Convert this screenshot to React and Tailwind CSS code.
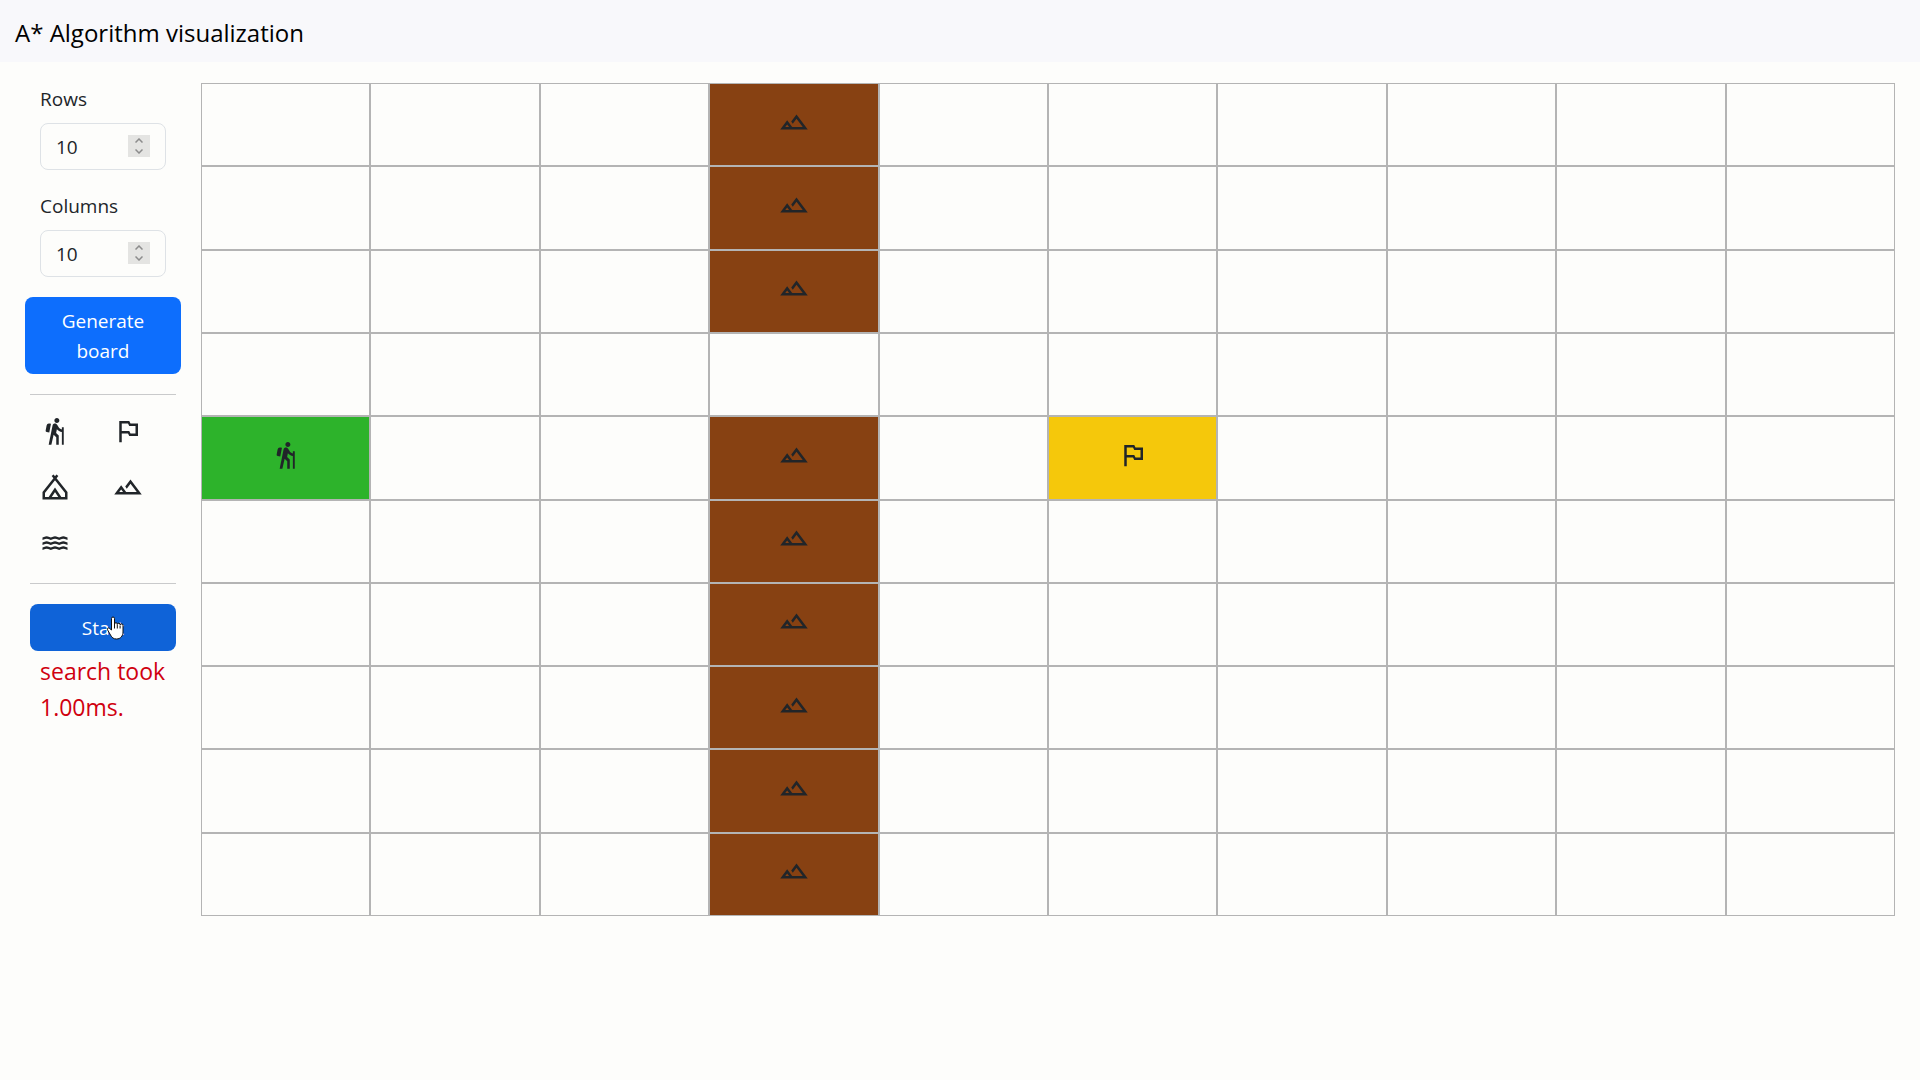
import { MdHiking, MdOutlinedFlag, MdOutlineLandscape } from "react-icons/md";
import { useState } from "react";

function Camping({ className }) {
  return (
    <svg viewBox="0 0 24 24" fill="none" stroke="currentColor" strokeWidth="2" className={className} aria-hidden="true">
      <path d="M3 21v-4.600L13.900 2.600M21 21v-4.600L10.100 2.600M2 21h20M7.500 21 12 14.200 16.500 21" />
    </svg>
  );
}

function Waves({ className }) {
  const wave = "c1.4 0 1.9-1 3.33-1s1.9 1 3.33 1 1.9-1 3.34-1 1.9 1 3.33 1 1.9-1 3.33-1 1.9 1 3.34 1";
  return (
    <svg viewBox="0 0 24 24" fill="none" stroke="currentColor" strokeWidth="2" className={className} aria-hidden="true">
      <path d={`M2 8.500${wave}M2 12.500${wave}M2 16.500${wave}`} />
    </svg>
  );
}

const TOOLS = [
  { name: "Start point", Icon: MdHiking },
  { name: "Goal", Icon: MdOutlinedFlag },
  { name: "Camp", Icon: Camping },
  { name: "Mountain", Icon: MdOutlineLandscape },
  { name: "Water", Icon: Waves },
];

function cellAt(row, col) {
  if (col === 3 && row !== 3) return { Icon: MdOutlineLandscape, color: "bg-[#874112]" };
  if (row === 4 && col === 0) return { Icon: MdHiking, color: "bg-[#2db32b]" };
  if (row === 4 && col === 5) return { Icon: MdOutlinedFlag, color: "bg-[#f5c80b]" };
  return { Icon: null, color: "" };
}

function NumberField({ id, label }) {
  const [value, setValue] = useState(10);
  return (
    <div className="mb-5 px-[10px]">
      <label htmlFor={id} className="mb-2 block leading-8">{label}</label>
      <div className="relative">
        <input
          id={id}
          type="number"
          value={value}
          onChange={(e) => setValue(Number(e.target.value))}
          className="block h-[47px] w-full appearance-none rounded-lg border border-[#dee2e6] bg-transparent pt-px pl-[15px] [appearance:textfield]"
        />
        <div className="absolute top-3 right-4 grid h-[22px] w-[22px] grid-rows-2 bg-[#e4e4e2] text-[#8c8c8c]">
          <button type="button" aria-label={`Increase ${label}`} onClick={() => setValue(value + 1)} className="flex items-center justify-center">
            <svg viewBox="0 0 8 5" className="w-2" fill="none" stroke="currentColor" strokeWidth="1.5"><path d="m.5 4.500 3.500-3.500 3.500 3.500" /></svg>
          </button>
          <button type="button" aria-label={`Decrease ${label}`} onClick={() => setValue(value - 1)} className="flex items-center justify-center">
            <svg viewBox="0 0 8 5" className="w-2" fill="none" stroke="currentColor" strokeWidth="1.5"><path d="m.5.5 3.500 3.500 3.500-3.500" /></svg>
          </button>
        </div>
      </div>
    </div>
  );
}

function Pointer() {
  return (
    <svg viewBox="0 0 18 24" className="pointer-events-none absolute top-3 left-[76px] h-6 w-[18px]" aria-hidden="true">
      <path
        d="M5.500 14V2.500a1.500 1.500 0 0 1 3 0V8a1.400 1.400 0 0 1 2.800.3 1.400 1.400 0 0 1 2.800.6 1.400 1.400 0 0 1 2.900 1V16c0 4-2.500 7-6.500 7-3 0-4.500-1.300-6-4l-3-5.200c-.8-1.600 1-2.500 2.200-1.300z"
        fill="#fff" stroke="#111" strokeWidth="1"
      />
      <path d="M8.500 8v4.500M11.300 8.500v4M14.100 9.500v3" stroke="#111" strokeWidth="1" fill="none" />
    </svg>
  );
}

export default function App() {
  return (
    <div className="min-h-screen bg-[#fdfdfb] font-['Open_Sans','Noto_Sans',sans-serif] text-[19px] leading-[30px] text-[#212529]">
      <header className="flex h-[62px] items-center bg-[#f8f8fb] px-[15px] pt-1">
        <h1 className="text-2xl text-black">A* Algorithm visualization</h1>
      </header>
      <main className="flex pt-[21px] pr-[25px]">
        <aside className="w-[201px] shrink-0 pr-[25px] pl-[30px]">
          <NumberField id="rows" label="Rows" />
          <NumberField id="columns" label="Columns" />
          <button type="button" className="-mx-[5px] block w-[156px] rounded-lg bg-[#0d6efd] px-4 pt-[9px] pb-2 text-white">Generate board</button>
          <hr className="mt-5 mb-2 border-[#c9cacb]" />
          <div className="grid grid-cols-2">
            {TOOLS.map(({ name, Icon }) => (
              <button key={name} type="button" aria-label={name} className="flex h-14 items-center pl-[10px]">
                <Icon className="h-[30px] w-[30px]" />
              </button>
            ))}
          </div>
          <hr className="mt-3 mb-5 border-[#c9cacb]" />
          <div className="relative">
            <button type="button" className="block h-[47px] w-full rounded-lg bg-[#0f63d8] text-white">Start</button>
            <Pointer />
          </div>
          <p className="pt-0.5 pl-[10px] text-[23px] leading-9 text-[#d0000f]">search took 1.00ms.</p>
        </aside>
        <section aria-label="Board" className="grid h-[calc(100vh-247px)] grow grid-cols-10 grid-rows-10">
          {Array.from({ length: 100 }, (_, i) => {
            const { Icon, color } = cellAt(Math.floor(i / 10), i % 10);
            return (
              <div key={i} className={`flex items-center justify-center border border-[#b4b4b4] pb-1.5 ${color}`}>
                {Icon && <Icon className="h-[30px] w-[30px]" />}
              </div>
            );
          })}
        </section>
      </main>
    </div>
  );
}
